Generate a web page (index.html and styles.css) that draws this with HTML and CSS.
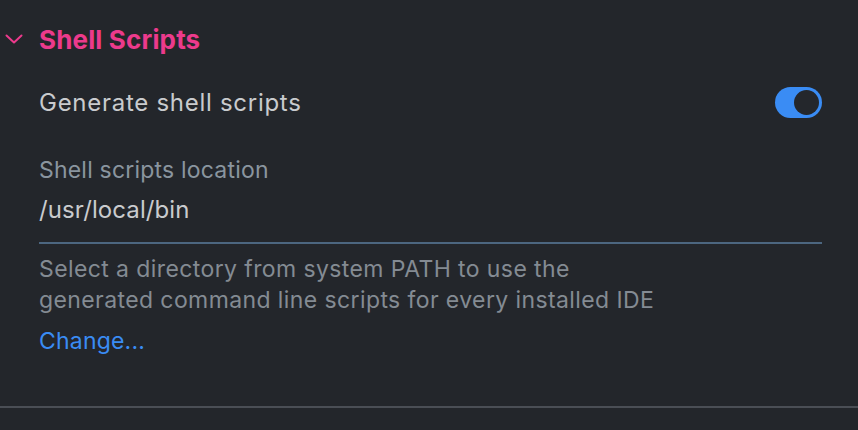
FILE: index.html
```html
<!DOCTYPE html>
<html>
<head>
<meta charset="utf-8">
<link rel="stylesheet" href="styles.css">
</head>
<body>
<div class="panel">
  <div class="section-header">
    <svg class="chevron" width="18" height="10" viewBox="0 0 18 10"><path d="M1.5 1.5 L9 8.5 L16.5 1.5" fill="none" stroke="#ec3a8c" stroke-width="2" stroke-linecap="round" stroke-linejoin="round"/></svg>
    <span class="section-title">Shell Scripts</span>
  </div>
  <div class="section-body">
    <div class="row">
      <span class="row-label">Generate shell scripts</span>
      <span class="toggle"><span class="knob"></span></span>
    </div>
    <div class="field">
      <div class="field-label">Shell scripts location</div>
      <div class="field-value">/usr/local/bin</div>
    </div>
    <div class="help">Select a directory from system PATH to use the<br>generated command line scripts for every installed IDE</div>
    <div class="link">Change...</div>
  </div>
  <div class="divider"></div>
</div>
</body>
</html>
```
FILE: styles.css
```css
html, body {
  margin: 0;
  padding: 0;
  background: #23262b;
}
body {
  width: 858px;
  height: 430px;
  overflow: hidden;
  font-family: Inter, "Noto Sans", sans-serif;
}
.panel {
  display: flex;
  flex-direction: column;
}
.section-header {
  display: flex;
  align-items: center;
  height: 36px;
  margin-top: 21px;
  padding-left: 5px;
  gap: 16px;
}
.chevron { display: block; }
.section-title {
  color: #ec3a8c;
  font-size: 26px;
  letter-spacing: 0.15px;
  font-weight: 700;
}
.section-body {
  padding: 0 36px 0 39px;
}
.row {
  display: flex;
  align-items: center;
  justify-content: space-between;
  height: 32px;
  margin-top: 29px;
}
.row-label {
  color: #c9cbce;
  font-size: 24px;
  letter-spacing: 0.72px;
}
.toggle {
  position: relative;
  width: 47px;
  height: 31px;
  border-radius: 16px;
  background: #3a8cf4;
}
.knob {
  position: absolute;
  right: 3px;
  top: 3px;
  width: 25px;
  height: 25px;
  border-radius: 50%;
  background: #24272c;
}
.field {
  margin-top: 38px;
  border-bottom: 2px solid #4c6680;
  padding-bottom: 16px;
}
.field-label {
  color: #8a959f;
  font-size: 23px;
  letter-spacing: 0.2px;
  line-height: 28px;
}
.field-value {
  color: #c9cbce;
  font-size: 24px;
  letter-spacing: 0.1px;
  line-height: 32px;
  margin-top: 10px;
}
.help {
  margin-top: 10px;
  color: #848b93;
  font-size: 23px;
  letter-spacing: 0.4px;
  line-height: 31px;
}
.link {
  margin-top: 11px;
  color: #3a8cf4;
  font-size: 23px;
  letter-spacing: 0.2px;
  line-height: 28px;
}
.divider {
  margin-top: 51px;
  height: 2px;
  background: #4a4e55;
}
```
